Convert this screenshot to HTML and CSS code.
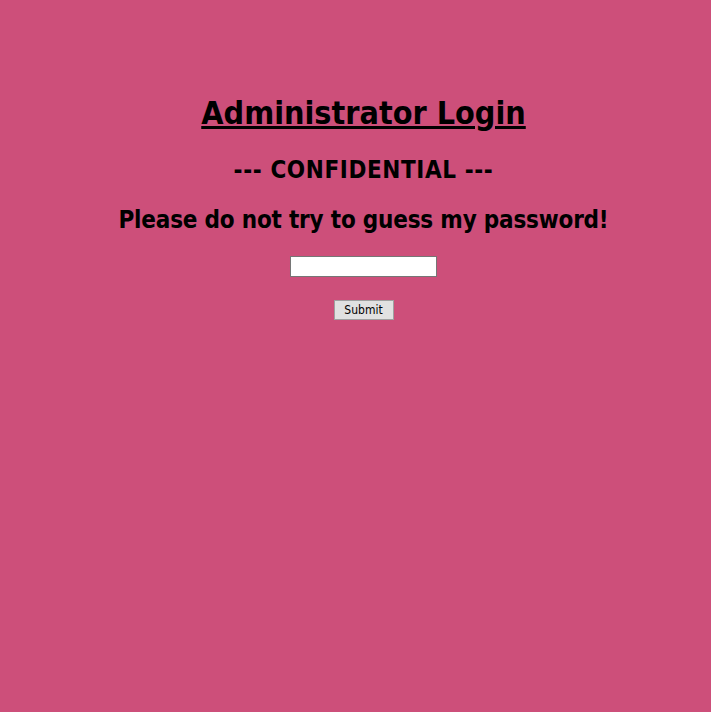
FILE: index.html
```html
<!DOCTYPE html>
<html>
<head>
<meta charset="utf-8">
<title>Administrator Login</title>
<link rel="stylesheet" href="styles.css">
</head>
<body>
<div class="page">
  <h1 class="title">Administrator Login</h1>
  <h2 class="sub sub-conf">--- CONFIDENTIAL ---</h2>
  <h2 class="sub sub-warn">Please do not try to guess my password!</h2>
  <form class="login">
    <input class="pw" type="password">
    <button class="submit" type="button">Submit</button>
  </form>
</div>
</body>
</html>
```
FILE: styles.css
```css
html, body {
  margin: 0;
  padding: 0;
  background: #cd4f7a;
}
body {
  font-family: "DejaVu Sans Condensed", "DejaVu Sans", sans-serif;
  color: #000;
}
.page {
  padding: 94px 0 0 16px;
  display: flex;
  flex-direction: column;
  align-items: center;
  text-align: center;
}
.title {
  font-size: 32px;
  font-weight: bold;
  text-decoration: underline;
  margin: 0 0 24px;
}
.sub {
  font-size: 24px;
  font-weight: bold;
  margin: 0 0 22px;
}
.sub-conf {
  letter-spacing: 0.6px;
}
.sub-warn {
  letter-spacing: -0.2px;
}
.login {
  display: flex;
  flex-direction: column;
  align-items: center;
  gap: 23px;
}
.pw {
  width: 147px;
  height: 21px;
  box-sizing: border-box;
  border: 1px solid #767676;
  background: #fff;
  padding: 0;
}
.submit {
  width: 60px;
  height: 20px;
  box-sizing: border-box;
  border: 1px solid #a0a0a0;
  background: #e1e1e1;
  font-family: "DejaVu Sans Condensed", "DejaVu Sans", sans-serif;
  font-size: 12px;
  padding: 0;
  color: #000;
}
```
